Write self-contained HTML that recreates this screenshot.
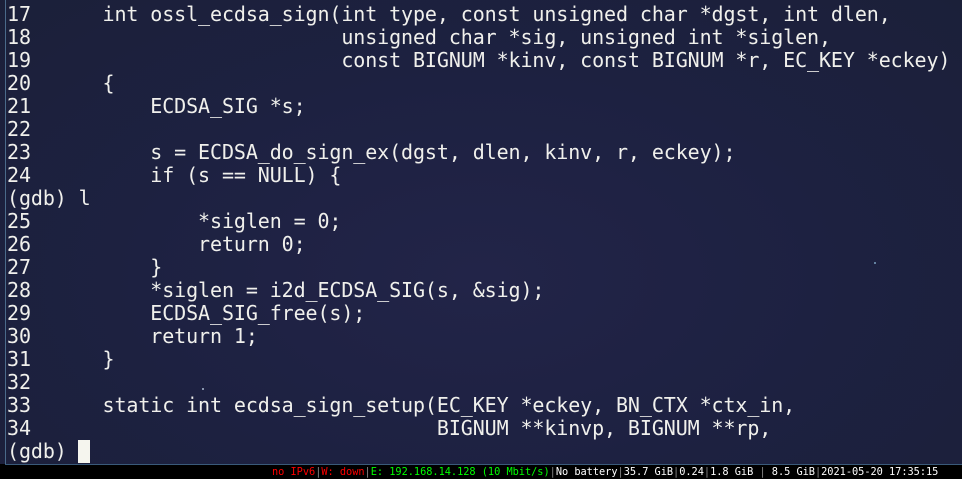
<!DOCTYPE html>
<html><head><meta charset="utf-8"><style>
html,body{margin:0;padding:0;width:962px;height:478px;overflow:hidden;background:#000}
#term{position:absolute;left:0;top:0;width:962px;height:464px;background:radial-gradient(ellipse at 50% 60%,#222448 0%,#1d2141 50%,#1b2039 100%);}
#bl{position:absolute;left:5px;top:0;width:1px;height:464px;background:#4a6a8a}
#bb{position:absolute;left:5px;top:464px;width:957px;height:1px;background:#3a5a7a}
.tx{position:absolute;left:7px;top:3px;margin:0;font-family:"DejaVu Sans Mono","Liberation Mono",monospace;font-size:20px;line-height:23px;color:#f0f0ec;white-space:pre;letter-spacing:-0.1px}
#cur{position:absolute;left:78px;top:440px;width:12px;height:23px;background:#f5f5ee}
#bar{position:absolute;left:0;top:465px;width:962px;height:13px;background:#000;font-family:"DejaVu Sans Mono",monospace;font-size:10.3px;line-height:13px;white-space:pre;}
#bar .t{position:absolute;left:272px;top:1px;color:#fff;letter-spacing:-0.03px}
.r{color:#ff0000}.g{color:#00ff00}.s{color:#888}
.st{position:absolute;border-radius:50%;background:#7aa0c0}
</style></head><body>
<div id="term">
<div class="st" style="left:874px;top:262px;width:2px;height:2px"></div>
<div class="st" style="left:202px;top:388px;width:2px;height:2px;background:#aabbd0"></div>
</div>
<div id="bl"></div><div id="bb"></div>
<pre class="tx">17      int ossl_ecdsa_sign(int type, const unsigned char *dgst, int dlen,
18                          unsigned char *sig, unsigned int *siglen,
19                          const BIGNUM *kinv, const BIGNUM *r, EC_KEY *eckey)
20      {
21          ECDSA_SIG *s;
22
23          s = ECDSA_do_sign_ex(dgst, dlen, kinv, r, eckey);
24          if (s == NULL) {
(gdb) l
25              *siglen = 0;
26              return 0;
27          }
28          *siglen = i2d_ECDSA_SIG(s, &amp;sig);
29          ECDSA_SIG_free(s);
30          return 1;
31      }
32
33      static int ecdsa_sign_setup(EC_KEY *eckey, BN_CTX *ctx_in,
34                                  BIGNUM **kinvp, BIGNUM **rp,
(gdb) </pre>
<div id="cur"></div>
<div id="bar"><span class="t"><span class="r">no IPv6</span><span class="s">|</span><span class="r">W: down</span><span class="s">|</span><span class="g">E: 192.168.14.128 (10 Mbit/s)</span><span class="s">|</span>No battery<span class="s">|</span>35.7 GiB<span class="s">|</span>0.24<span class="s">|</span>1.8 GiB <span class="s">|</span> 8.5 GiB<span class="s">|</span>2021-05-20 17:35:15</span></div>
</body></html>
